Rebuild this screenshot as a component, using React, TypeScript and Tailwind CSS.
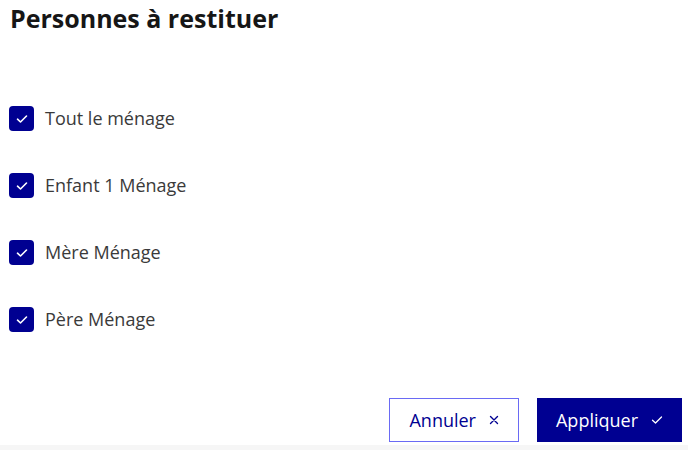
const people = ["Tout le ménage", "Enfant 1 Ménage", "Mère Ménage", "Père Ménage"];

function CheckIcon({ className, width = 1.8 }: { className?: string; width?: number }) {
  return (
    <svg viewBox="0 0 12 10" className={className} fill="none" stroke="currentColor" strokeWidth={width} strokeLinecap="round" strokeLinejoin="round">
      <polyline points="1.5,5.2 4.5,8 10.5,2" />
    </svg>
  );
}

function CrossIcon({ className }: { className?: string }) {
  return (
    <svg viewBox="0 0 10 10" className={className} fill="none" stroke="currentColor" strokeWidth={1.4} strokeLinecap="round">
      <path d="M1.5 1.5l7 7M8.5 1.5l-7 7" />
    </svg>
  );
}

function CheckBox() {
  return (
    <span className="w-[25px] h-[25px] rounded-[4px] bg-[#000091] flex items-center justify-center shrink-0">
      <CheckIcon className="w-[12px] h-[10px] text-white" width={1.6} />
    </span>
  );
}

export default function App() {
  return (
    <div className="w-[688px] h-[450px] bg-white flex flex-col font-['Open_Sans',sans-serif] overflow-hidden">
      <h1 className="px-[10px] pt-[2px] text-[25px] leading-[32px] font-bold text-[#161616]">
        Personnes à restituer
      </h1>

      <ul className="flex flex-col gap-[42px] px-[9px] mt-[72px]">
        {people.map((p) => (
          <li key={p} className="flex items-center gap-[11px] h-[25px]">
            <CheckBox />
            <span className="text-[18px] text-[#3a3a3a]">{p}</span>
          </li>
        ))}
      </ul>

      <div className="flex-1" />

      <div className="flex justify-end gap-[18px] pr-[6px] pb-[3px]">
        <button className="h-[44px] px-[19px] border border-[#6a6af4] text-[#000091] text-[18px] font-medium flex items-center gap-[13px]">
          Annuler
          <CrossIcon className="w-[10px] h-[10px]" />
        </button>
        <button className="h-[44px] px-[19px] bg-[#000091] text-white text-[18px] font-medium flex items-center gap-[13px]">
          Appliquer
          <CheckIcon className="w-[12px] h-[10px]" width={1.3} />
        </button>
      </div>
      <div className="h-[5px] bg-[#f6f6f6]" />
    </div>
  );
}
